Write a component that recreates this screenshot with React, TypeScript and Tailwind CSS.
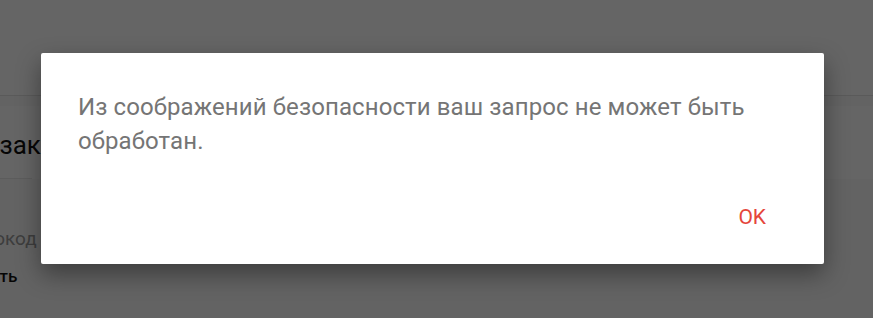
import React from 'react';

export default function App() {
  return (
    <div className="relative h-[318px] w-[873px] overflow-hidden bg-[#fafafa] font-['Roboto',sans-serif]">
      {/* page underneath the dialog */}
      <div className="flex h-full flex-col">
        <div className="h-[96px] shrink-0 border-b border-[#e0e0e0] bg-[#fcfcfc]">
          <p className="-ml-[93px] pt-[8px] text-[15px] text-[#9e9e9e]">Доставки:</p>
        </div>
        <div className="flex-1 bg-[#f7f7f7] pt-[10px]">
          <div className="bg-[#fdfdfd]">
            <h2 className="-ml-[165px] pt-[22px] text-[26px] leading-[34px] text-[#111]">Оформление заказа</h2>
            <div className="mt-[16px] mr-[841px] border-b border-[#e6e6e6]" />
          </div>
          <p className="-ml-[55px] mt-[46px] text-[19px] text-[#9a9a9a]">Промокод</p>
          <p className="-ml-[73px] mt-[10px] text-[17px] font-medium text-[#111]">Применить</p>
        </div>
      </div>

      {/* overlay */}
      <div className="absolute inset-0 flex items-center bg-black/60 pl-[41px] pb-[1px]">
        <div className="flex h-[211px] w-[783px] flex-col rounded-[2px] bg-white shadow-[0_10px_24px_rgba(0,0,0,0.4)]">
          <p className="pl-[37px] pr-[40px] pt-[37px] text-[24px] leading-[34px] tracking-[0.1px] text-[#757575]">
            Из соображений безопасности ваш запрос не может быть обработан.
          </p>
          <div className="mt-auto flex justify-end pb-[34px] pr-[58px]">
            <button className="text-[21px] leading-[26px] text-[#e5463b]">OK</button>
          </div>
        </div>
      </div>
    </div>
  );
}
